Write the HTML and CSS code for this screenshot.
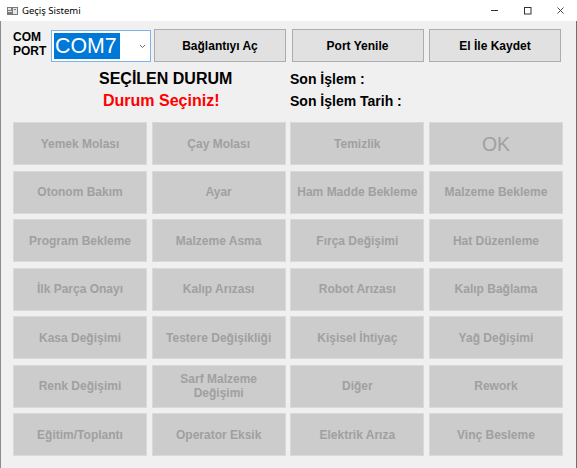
FILE: index.html
```html
<!DOCTYPE html>
<html lang="tr">
<head>
<meta charset="utf-8">
<title>Geçiş Sistemi</title>
<link rel="stylesheet" href="styles.css">
</head>
<body>
<div class="window">
  <header class="titlebar">
    <svg class="app-icon" width="11" height="8" viewBox="0 0 11 8">
      <rect x="0" y="0" width="11" height="8" fill="#7a7a7a"/>
      <rect x="1" y="1" width="3" height="2" fill="#e8e8e8"/>
      <rect x="1" y="4" width="4" height="1" fill="#e8e8e8"/>
      <rect x="6" y="1" width="4" height="6" fill="#e8e8e8"/>
      <rect x="7" y="2" width="2" height="1" fill="#7a7a7a"/>
    </svg>
    <span class="title">Geçiş Sistemi</span>
    <div class="controls">
      <span class="ctl"><svg width="9" height="9" viewBox="0 0 9 9"><line x1="1" y1="4.5" x2="8" y2="4.5" stroke="#333" stroke-width="1"/></svg></span>
      <span class="ctl"><svg width="9" height="9" viewBox="0 0 9 9"><rect x="1.5" y="1.5" width="6.5" height="6.5" fill="none" stroke="#333" stroke-width="1"/></svg></span>
      <span class="ctl"><svg width="9" height="9" viewBox="0 0 9 9"><path d="M1.5 1.5 L7.5 7.5 M7.5 1.5 L1.5 7.5" stroke="#333" stroke-width="0.9" fill="none"/></svg></span>
    </div>
  </header>
  <main class="client">
    <div class="toprow">
      <div class="port-label">COM<br>PORT</div>
      <div class="combo">
        <span class="combo-value">COM7</span>
        <svg class="chev" width="7" height="5" viewBox="0 0 7 5"><polyline points="1,1 3.5,3.5 6,1" fill="none" stroke="#666" stroke-width="1"/></svg>
      </div>
      <div class="actions">
        <button class="btn">Bağlantıyı Aç</button>
        <button class="btn">Port Yenile</button>
        <button class="btn">El İle Kaydet</button>
      </div>
    </div>
    <div class="status">
      <div class="status-left">
        <div class="sel-title">SEÇİLEN DURUM</div>
        <div class="sel-value">Durum Seçiniz!</div>
      </div>
      <div class="status-right">
        <div class="info">Son İşlem :</div>
        <div class="info">Son İşlem Tarih :</div>
      </div>
    </div>
    <div class="grid">
      <button class="cell">Yemek Molası</button>
      <button class="cell">Çay Molası</button>
      <button class="cell">Temizlik</button>
      <button class="cell cell-ok">OK</button>
      <button class="cell">Otonom Bakım</button>
      <button class="cell">Ayar</button>
      <button class="cell">Ham Madde Bekleme</button>
      <button class="cell">Malzeme Bekleme</button>
      <button class="cell">Program Bekleme</button>
      <button class="cell">Malzeme Asma</button>
      <button class="cell">Fırça Değişimi</button>
      <button class="cell">Hat Düzenleme</button>
      <button class="cell">İlk Parça Onayı</button>
      <button class="cell">Kalıp Arızası</button>
      <button class="cell">Robot Arızası</button>
      <button class="cell">Kalıp Bağlama</button>
      <button class="cell">Kasa Değişimi</button>
      <button class="cell">Testere Değişikliği</button>
      <button class="cell">Kişisel İhtiyaç</button>
      <button class="cell">Yağ Değişimi</button>
      <button class="cell">Renk Değişimi</button>
      <button class="cell">Sarf Malzeme<br>Değişimi</button>
      <button class="cell">Diğer</button>
      <button class="cell">Rework</button>
      <button class="cell">Eğitim/Toplantı</button>
      <button class="cell">Operator Eksik</button>
      <button class="cell">Elektrik Arıza</button>
      <button class="cell">Vinç Besleme</button>
    </div>
  </main>
</div>
</body>
</html>
```
FILE: styles.css
```css
html, body {
  margin: 0;
  padding: 0;
  height: 100%;
}
body {
  background: #f0f0f0;
  font-family: "Liberation Sans", Arial, sans-serif;
  overflow: hidden;
}
.window {
  width: 577px;
  height: 468px;
  display: flex;
  flex-direction: column;
}
.titlebar {
  height: 21px;
  background: #ffffff;
  display: flex;
  align-items: center;
  flex: none;
}
.app-icon {
  margin-left: 7px;
  margin-top: 1px;
}
.title {
  margin-left: 4px;
  font-family: "Noto Sans", "Liberation Sans", sans-serif;
  font-size: 9.5px;
  color: #000;
}
.controls {
  margin-left: auto;
  display: flex;
  height: 21px;
}
.ctl {
  width: 33px;
  height: 21px;
  display: flex;
  align-items: center;
  justify-content: center;
}
.client {
  flex: 1;
  border-left: 1px solid #8c8c8c;
  border-right: 1px solid #6e6e6e;
  padding: 8px 0 0 12px;
  background: #f0f0f0;
}
.toprow {
  display: flex;
  align-items: flex-start;
  height: 33px;
}
.port-label {
  width: 38px;
  padding-top: 2px;
  font-weight: bold;
  font-size: 12px;
  line-height: 13.5px;
  color: #000;
}
.combo {
  box-sizing: border-box;
  margin-top: 1px;
  width: 100px;
  height: 32px;
  border: 1px solid #7eb4ea;
  background: #fff;
  display: flex;
  align-items: center;
  padding-left: 2px;
}
.combo-value {
  background: #0078d7;
  color: #fff;
  font-size: 21.33px;
  line-height: 26px;
  padding: 0 3px 0 1px;
}
.chev {
  margin-left: auto;
  margin-right: 4px;
}
.actions {
  display: flex;
  gap: 5.5px;
  margin-left: 3px;
}
.btn {
  box-sizing: border-box;
  width: 132px;
  height: 33px;
  background: #e1e1e1;
  border: 1px solid #adadad;
  font-family: "Liberation Sans", Arial, sans-serif;
  font-weight: bold;
  font-size: 12px;
  color: #000;
  padding: 0;
}
.status {
  display: flex;
  margin-top: 8px;
}
.status-left {
  box-sizing: border-box;
  width: 277px;
  padding-left: 86px;
  display: flex;
  flex-direction: column;
  gap: 4px;
}
.sel-title {
  font-weight: bold;
  font-size: 16px;
  line-height: 18px;
  color: #000;
}
.sel-value {
  font-weight: bold;
  font-size: 16px;
  line-height: 18px;
  color: #ff0000;
  padding-left: 4px;
}
.status-right {
  display: flex;
  flex-direction: column;
  gap: 4px;
}
.info {
  font-weight: bold;
  font-size: 14px;
  line-height: 18px;
  color: #000;
}
.grid {
  margin-top: 12px;
  display: grid;
  grid-template-columns: repeat(4, 134px);
  grid-auto-rows: 43px;
  column-gap: 4.67px;
  row-gap: 5.5px;
}
.cell {
  box-sizing: border-box;
  background: #cccccc;
  border: 1px solid #d9d9d9;
  color: #a0a0a0;
  font-family: "Liberation Sans", Arial, sans-serif;
  font-weight: bold;
  font-size: 12px;
  line-height: 14px;
  padding: 0;
}
.cell-ok {
  font-weight: normal;
  font-size: 19.5px;
}
```
